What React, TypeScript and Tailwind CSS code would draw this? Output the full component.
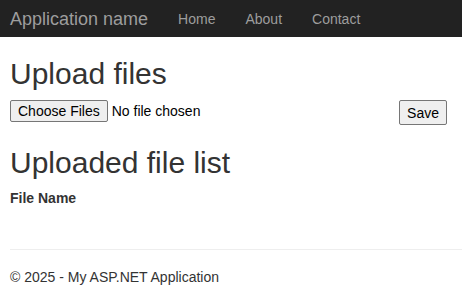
export default function App() {
  const font = { fontFamily: '"Liberation Sans", Arial, sans-serif' };
  return (
    <div className="min-h-screen bg-white text-[#333] text-[14px] leading-[20px]" style={font}>
      <nav className="flex h-[37px] items-center bg-[#222]">
        <a className="pl-[10px] pr-[15px] text-[18px] leading-[20px] text-[#9d9d9d]">Application name</a>
        <ul className="flex">
          <li className="px-[15px] text-[#9d9d9d]">Home</li>
          <li className="px-[15px] text-[#9d9d9d]">About</li>
          <li className="px-[15px] text-[#9d9d9d]">Contact</li>
        </ul>
      </nav>

      <main className="px-[10px]">
        <h2 className="mt-[20px] text-[30px] leading-[33px] font-normal">Upload files</h2>
        <div className="mt-[10px] flex items-start justify-between pr-[5px]">
          <div className="flex items-center gap-[4px]">
            <button className="h-[22px] rounded-[2px] border border-[#767676] bg-[#efefef] px-[7px] text-[14px] leading-[18px] text-black">
              Choose Files
            </button>
            <span className="text-black">No file chosen</span>
          </div>
          <button className="h-[25px] rounded-[2px] border border-[#767676] bg-[#efefef] px-[7px] text-[14px] leading-[18px] text-black">
            Save
          </button>
        </div>

        <h2 className="mt-[21px] text-[30px] leading-[33px] font-normal">Uploaded file list</h2>
        <table className="mt-[9px]">
          <thead>
            <tr>
              <th className="text-left font-bold">File Name</th>
            </tr>
          </thead>
        </table>
      </main>

      <footer className="ml-[10px] mt-[41px]">
        <hr className="border-[#eee]" />
        <p className="mt-[17px]">© 2025 - My ASP.NET Application</p>
      </footer>
    </div>
  );
}
